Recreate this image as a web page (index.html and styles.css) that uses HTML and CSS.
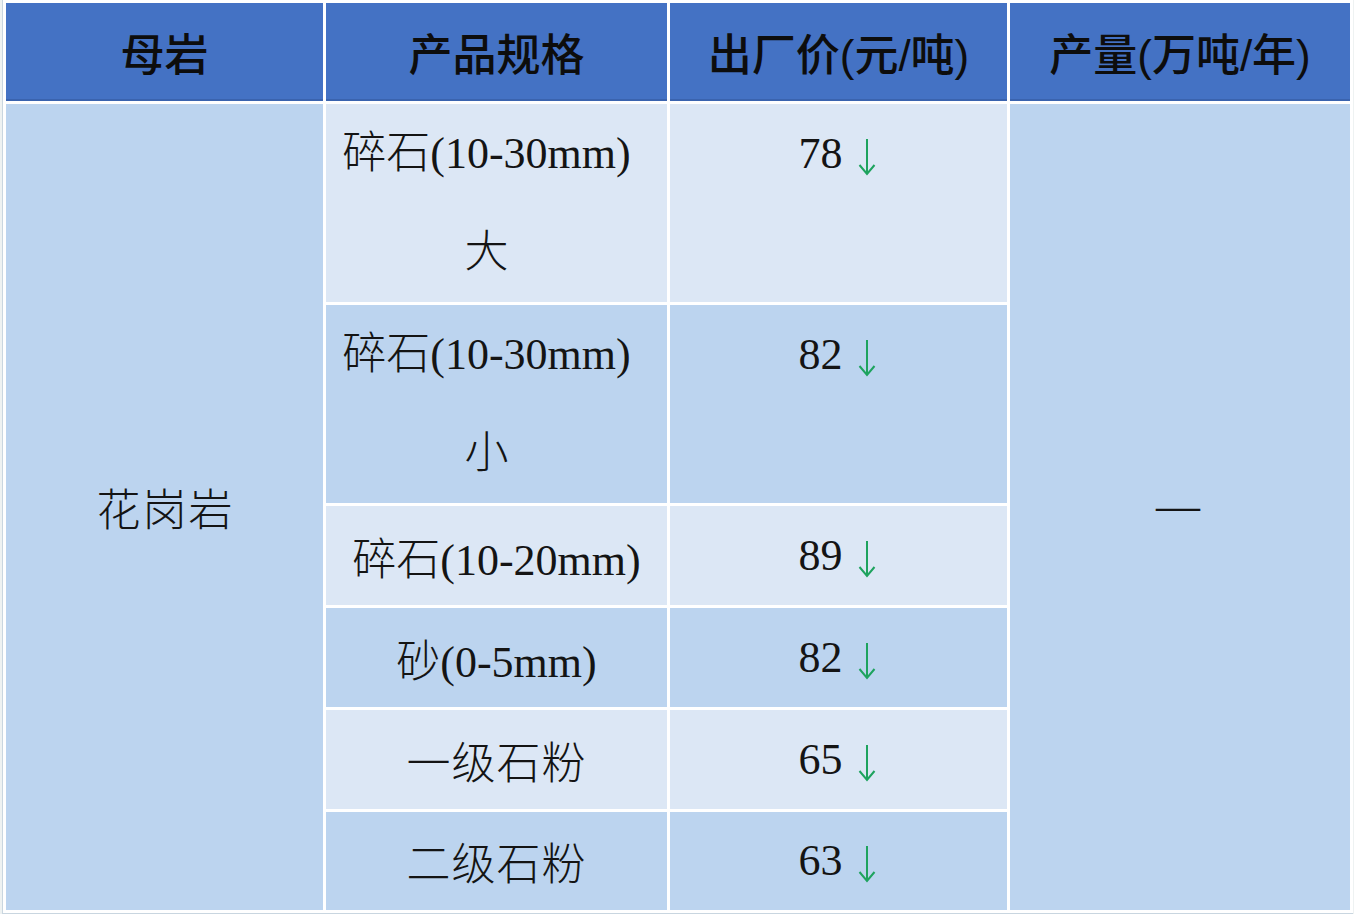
FILE: index.html
```html
<!DOCTYPE html>
<html lang="zh">
<head>
<meta charset="utf-8">
<title>花岗岩价格表</title>
<link rel="stylesheet" href="styles.css">
</head>
<body>
<div class="sheet">
  <div class="cell head">母岩</div>
  <div class="cell head">产品规格</div>
  <div class="cell head">出厂价(元/吨)</div>
  <div class="cell head">产量(万吨/年)</div>

  <div class="cell rock">花岗岩</div>

  <div class="cell spec light tall"><span>碎石(10-30mm)<br>大</span></div>
  <div class="cell price light tall"><span>78<svg class="arrow" viewBox="0 0 18 38"><path d="M9 1V36M1.5 27L9 36L16.5 27"/></svg></span></div>

  <div class="cell output">—</div>

  <div class="cell spec dark tall"><span>碎石(10-30mm)<br>小</span></div>
  <div class="cell price dark tall"><span>82<svg class="arrow" viewBox="0 0 18 38"><path d="M9 1V36M1.5 27L9 36L16.5 27"/></svg></span></div>

  <div class="cell spec light"><span>碎石(10-20mm)</span></div>
  <div class="cell price light"><span>89<svg class="arrow" viewBox="0 0 18 38"><path d="M9 1V36M1.5 27L9 36L16.5 27"/></svg></span></div>

  <div class="cell spec dark"><span>砂(0-5mm)</span></div>
  <div class="cell price dark"><span>82<svg class="arrow" viewBox="0 0 18 38"><path d="M9 1V36M1.5 27L9 36L16.5 27"/></svg></span></div>

  <div class="cell spec light"><span class="wide">一级石粉</span></div>
  <div class="cell price light"><span>65<svg class="arrow" viewBox="0 0 18 38"><path d="M9 1V36M1.5 27L9 36L16.5 27"/></svg></span></div>

  <div class="cell spec dark"><span class="wide">二级石粉</span></div>
  <div class="cell price dark"><span>63<svg class="arrow" viewBox="0 0 18 38"><path d="M9 1V36M1.5 27L9 36L16.5 27"/></svg></span></div>
</div>
</body>
</html>
```
FILE: styles.css
```css
html, body {
  margin: 0;
  padding: 0;
  background: #eef2f2;
}

.sheet {
  display: grid;
  grid-template-columns: 317px 341px 337px 340px;
  grid-template-rows: 98px 198px 198px 99px 99px 99px 98px;
  gap: 3px;
  padding: 3px;
  margin-left: 2px;
  width: max-content;
  background: #ffffff;
  border-left: 1px solid #c9d6e0;
  border-bottom: 1px solid #c9d6e0;
}

.cell {
  display: flex;
  align-items: center;
  justify-content: center;
  color: #141414;
  font-family: "Liberation Serif", "Noto Sans CJK SC", serif;
  font-size: 44px;
  font-weight: 300;
  text-align: center;
}

.head {
  background: #4472c4;
  border-bottom: 2px solid #3a63ae;
  font-family: "Liberation Sans", "Noto Sans CJK SC", sans-serif;
  font-size: 44px;
  font-weight: 500;
  color: #0d0d0d;
  padding-top: 2px;
}

.rock {
  grid-column: 1;
  grid-row: 2 / 8;
  background: #bcd4ef;
  letter-spacing: 2px;
  padding-left: 2px;
}

.output {
  grid-column: 4;
  grid-row: 2 / 8;
  background: #bcd4ef;
  padding-bottom: 4px;
  padding-right: 4px;
}

.light { background: #dce7f5; }
.dark { background: #bcd4ef; }

.spec .wide { letter-spacing: 1px; }

.tall {
  align-items: flex-start;
  line-height: 99px;
}

.tall.spec span {
  margin-right: 20px;
}

.price span {
  display: inline-flex;
  align-items: flex-start;
  line-height: 1;
  margin-right: 3px;
}

.arrow {
  width: 18px;
  height: 38px;
  margin-left: 15px;
  margin-top: 6px;
  margin-bottom: -12px;
  fill: none;
  stroke: #1ea35e;
  stroke-width: 2;
}

.tall.price span {
  margin-top: 28px;
}
```
